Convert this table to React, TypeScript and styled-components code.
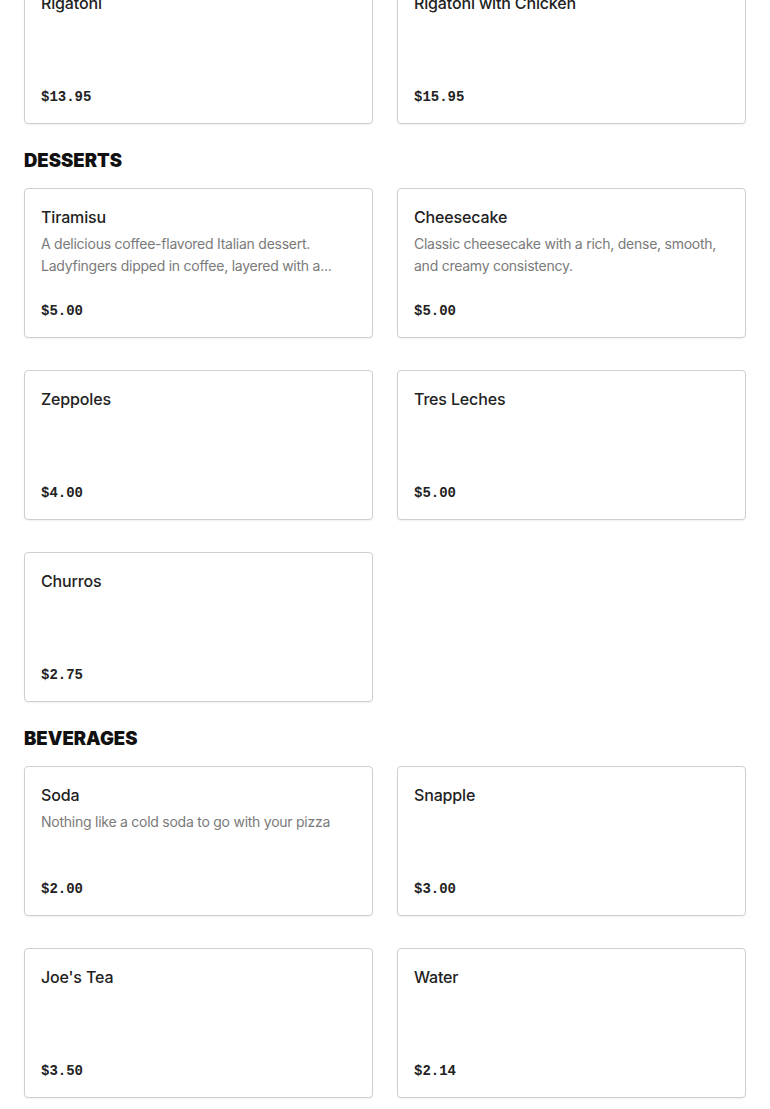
import React from "react";
import styled, { createGlobalStyle } from "styled-components";

const Global = createGlobalStyle`
  html, body { margin: 0; padding: 0; background: #ffffff; }
  body { font-family: Inter, "Noto Sans", sans-serif; color: #222; -webkit-font-smoothing: antialiased; }
`;

const Page = styled.main`
  padding: 0 24px 24px;
  margin-top: -26px;
  display: flex;
  flex-direction: column;
`;

const Section = styled.section`
  display: flex;
  flex-direction: column;
  & + & { margin-top: 24px; }
`;

const Heading = styled.h2`
  margin: 0 0 16px;
  font-family: Inter, sans-serif;
  font-weight: 900;
  font-size: 18.5px;
  line-height: 24px;
  letter-spacing: 0;
  color: #111;
  text-transform: uppercase;
`;

const Grid = styled.div`
  display: grid;
  grid-template-columns: 1fr 1fr;
  column-gap: 24px;
  row-gap: 32px;
`;

const Card = styled.article`
  box-sizing: border-box;
  height: 150px;
  border: 1px solid #cfcfcf;
  border-radius: 4px;
  box-shadow: 0 1px 2px rgba(0, 0, 0, 0.06);
  padding: 16px;
  display: flex;
  flex-direction: column;
  background: #fff;
`;

const Title = styled.h3`
  margin: 0;
  font-size: 16px;
  line-height: 24px;
  font-weight: 500;
  letter-spacing: -0.15px;
  color: #222;
`;

const Description = styled.p`
  margin: 4px 0 0;
  font-size: 14px;
  line-height: 22px;
  letter-spacing: -0.25px;
  color: #7a7a7a;
`;

const Price = styled.div`
  margin-top: auto;
  font-family: "Liberation Mono", "DejaVu Sans Mono", monospace;
  font-weight: 700;
  font-size: 14px;
  line-height: 20px;
  color: #222;
`;

type Item = { name: string; price: string; desc?: string };
type Sec = { title?: string; items: Item[] };

const sections: Sec[] = [
  {
    items: [
      { name: "Rigatoni", price: "$13.95" },
      { name: "Rigatoni with Chicken", price: "$15.95" },
    ],
  },
  {
    title: "Desserts",
    items: [
      {
        name: "Tiramisu",
        price: "$5.00",
        desc: "A delicious coffee-flavored Italian dessert. Ladyfingers dipped in coffee, layered with a...",
      },
      {
        name: "Cheesecake",
        price: "$5.00",
        desc: "Classic cheesecake with a rich, dense, smooth, and creamy consistency.",
      },
      { name: "Zeppoles", price: "$4.00" },
      { name: "Tres Leches", price: "$5.00" },
      { name: "Churros", price: "$2.75" },
    ],
  },
  {
    title: "Beverages",
    items: [
      { name: "Soda", price: "$2.00", desc: "Nothing like a cold soda to go with your pizza" },
      { name: "Snapple", price: "$3.00" },
      { name: "Joe's Tea", price: "$3.50" },
      { name: "Water", price: "$2.14" },
    ],
  },
];

export default function App() {
  return (
    <>
      <Global />
      <Page>
        {sections.map((s, i) => (
          <Section key={i}>
            {s.title && <Heading>{s.title}</Heading>}
            <Grid>
              {s.items.map((it) => (
                <Card key={it.name}>
                  <Title>{it.name}</Title>
                  {it.desc && <Description>{it.desc}</Description>}
                  <Price>{it.price}</Price>
                </Card>
              ))}
            </Grid>
          </Section>
        ))}
      </Page>
    </>
  );
}
